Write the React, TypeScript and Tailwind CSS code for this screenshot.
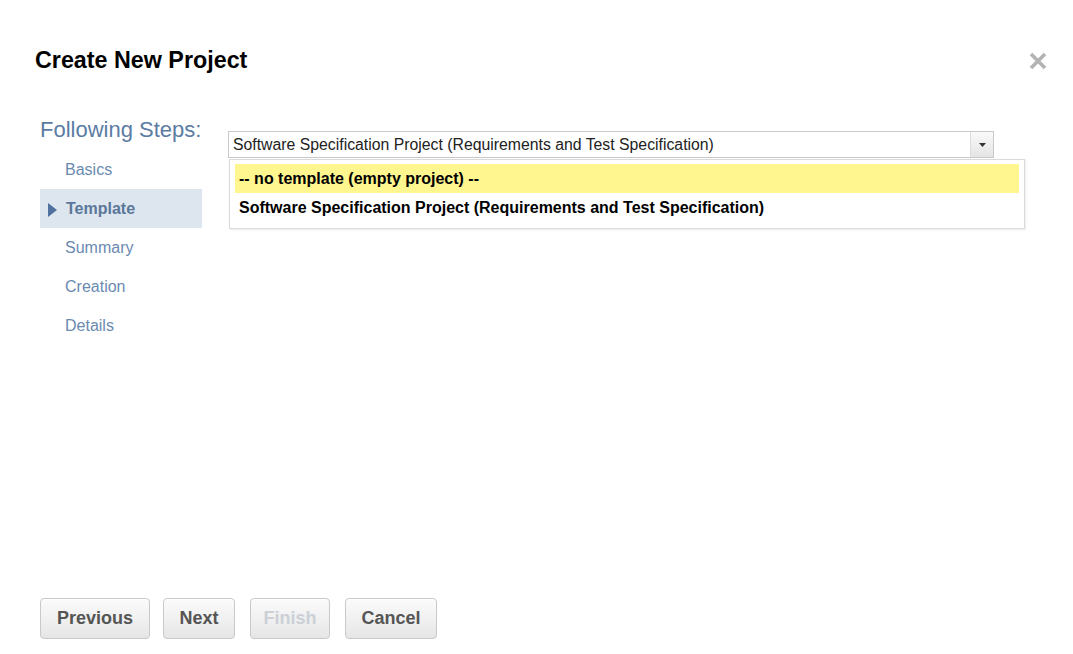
import React from "react";

const steps = ["Basics", "Template", "Summary", "Creation", "Details"];
const active = "Template";

const options = [
  "-- no template (empty project) --",
  "Software Specification Project (Requirements and Test Specification)",
];

function Button({ label, width, disabled }: { label: string; width: string; disabled?: boolean }) {
  return (
    <button
      className={
        "flex h-[41px] items-center justify-center rounded-[4px] border border-[#c9c9c9] bg-gradient-to-b from-[#fbfbfb] to-[#e6e6e6] text-[18px] font-bold shadow-[inset_0_1px_0_#fff] " +
        width +
        (disabled ? " text-[#cbd0d6]" : " text-[#555]")
      }
    >
      {label}
    </button>
  );
}

export default function App() {
  return (
    <div
      className="relative flex h-[654px] w-[1073px] flex-col bg-white"
      style={{ fontFamily: '"Liberation Sans", Arial, sans-serif' }}
    >
      <div className="flex items-center justify-between pl-[35px] pr-[26px] pt-[47px]">
        <h1 className="text-[23.3px] font-bold leading-[26px] text-black">
          Create New Project
        </h1>
        <svg width="18" height="18" viewBox="0 0 18 18" className="mt-[1px]">
          <path d="M2 2 L16 16 M16 2 L2 16" stroke="#b3b3b3" strokeWidth="3.6" strokeLinecap="butt" />
        </svg>
      </div>

      <div className="mt-[44px] flex flex-1 pl-[40px]">
        <aside className="w-[162px] shrink-0">
          <div className="-mt-[1px] h-[28px] whitespace-nowrap text-[22px] leading-[28px] text-[#5b7ca4]">
            Following Steps:
          </div>
          <ul className="mt-[6px]">
            {steps.map((s) =>
              s === active ? (
                <li
                  key={s}
                  className="flex h-[39px] items-center bg-[#dde5ef] text-[16px] font-bold text-[#5a7799]"
                >
                  <svg width="9" height="14" viewBox="0 0 9 14" className="ml-[8px] mr-[9px] mt-[2px]">
                    <path d="M0 0 L9 7 L0 14 Z" fill="#4f71a0" />
                  </svg>
                  {s}
                </li>
              ) : (
                <li
                  key={s}
                  className="flex h-[39px] items-center pl-[25px] text-[16px] text-[#6a8ab0]"
                >
                  {s}
                </li>
              )
            )}
          </ul>
        </aside>

        <div className="ml-[26px] flex-1 pr-[49px]">
          <div className="mt-[14px] flex h-[27px] w-[766px] border border-[#c9c9c9] bg-white">
            <div className="flex-1 truncate pl-[4px] text-[15.8px] leading-[25px] text-[#222]">
              Software Specification Project (Requirements and Test Specification)
            </div>
            <div className="flex w-[23px] items-center justify-center border-l border-[#dcdcdc] bg-gradient-to-b from-[#fafafa] to-[#e4e4e4]">
              <svg width="7" height="4" viewBox="0 0 7 4">
                <path d="M0 0 L7 0 L3.5 4 Z" fill="#333" />
              </svg>
            </div>
          </div>
          <div className="ml-[1px] mt-[1px] w-[796px] border border-[#dadada] bg-white px-[5px] pb-[6px] pt-[4px] shadow-[1px_1px_2px_rgba(0,0,0,0.08)]">
            {options.map((o, i) => (
              <div
                key={o}
                className={
                  "h-[29px] pl-[4px] text-[16px] font-bold leading-[29px] text-black " +
                  (i === 0 ? "bg-[#fff68f]" : "")
                }
              >
                {o}
              </div>
            ))}
          </div>
        </div>
      </div>

      <div className="flex gap-[13px] pb-[15px] pl-[40px]">
        <Button label="Previous" width="w-[110px]" />
        <div className="flex gap-[15px]">
          <Button label="Next" width="w-[72px]" />
          <Button label="Finish" width="w-[80px]" disabled />
          <Button label="Cancel" width="w-[92px]" />
        </div>
      </div>
    </div>
  );
}
